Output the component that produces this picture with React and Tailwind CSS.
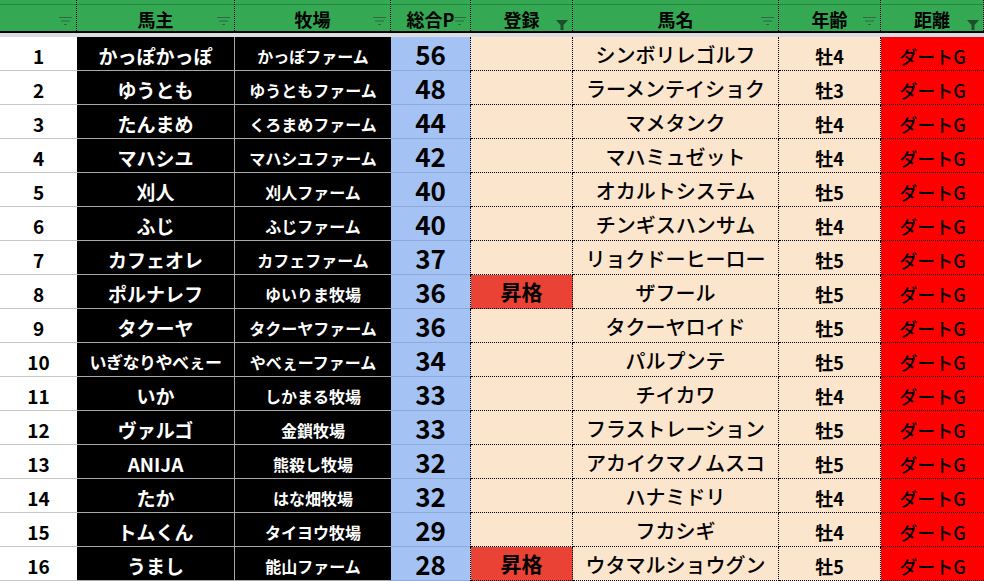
import React from 'react';

// 出走馬一覧（スプレッドシート風）
const rows = [
  [1, 'かっぽかっぽ', 'かっぽファーム', 56, '', 'シンボリレゴルフ', '牡4'],
  [2, 'ゆうとも', 'ゆうともファーム', 48, '', 'ラーメンテイショク', '牡3'],
  [3, 'たんまめ', 'くろまめファーム', 44, '', 'マメタンク', '牡4'],
  [4, 'マハシユ', 'マハシユファーム', 42, '', 'マハミュゼット', '牡4'],
  [5, '刈人', '刈人ファーム', 40, '', 'オカルトシステム', '牡5'],
  [6, 'ふじ', 'ふじファーム', 40, '', 'チンギスハンサム', '牡4'],
  [7, 'カフェオレ', 'カフェファーム', 37, '', 'リョクドーヒーロー', '牡5'],
  [8, 'ポルナレフ', 'ゆいりま牧場', 36, '昇格', 'ザフール', '牡5'],
  [9, 'タクーヤ', 'タクーヤファーム', 36, '', 'タクーヤロイド', '牡5'],
  [10, 'いぎなりやべぇー', 'やべぇーファーム', 34, '', 'パルプンテ', '牡5'],
  [11, 'いか', 'しかまる牧場', 33, '', 'チイカワ', '牡4'],
  [12, 'ヴァルゴ', '金鎖牧場', 33, '', 'フラストレーション', '牡5'],
  [13, 'ANIJA', '熊殺し牧場', 32, '', 'アカイクマノムスコ', '牡5'],
  [14, 'たか', 'はな畑牧場', 32, '', 'ハナミドリ', '牡4'],
  [15, 'トムくん', 'タイヨウ牧場', 29, '', 'フカシギ', '牡4'],
  [16, 'うまし', '能山ファーム', 28, '昇格', 'ウタマルショウグン', '牡5'],
];

const headers = [
  { label: '' },
  { label: '馬主' },
  { label: '牧場' },
  { label: '総合P' },
  { label: '登録', filtered: true },
  { label: '馬名' },
  { label: '年齢' },
  { label: '距離', filtered: true },
];

const cols = 'grid grid-cols-[77px_158px_156px_80px_102px_206px_102px_103px]';

function FilterIcon({ filtered }) {
  if (filtered) {
    return (
      <svg width="12" height="10" viewBox="0 0 12 10" className="absolute right-[4px] top-[20px]">
        <polygon points="0,0 12,0 7.5,5 7.5,10 4.5,10 4.5,5" fill="#1d4f2b" />
      </svg>
    );
  }
  return (
    <svg width="13" height="8" viewBox="0 0 13 8" className="absolute right-[4px] top-[17px]">
      <rect x="0" y="0" width="13" height="1" fill="#2f6b3e" />
      <rect x="2" y="3.5" width="9" height="1" fill="#2f6b3e" />
      <rect x="5" y="7" width="3" height="1" fill="#2f6b3e" />
    </svg>
  );
}

export default function App() {
  return (
    <div className="w-[984px] h-[581px] overflow-hidden bg-white font-['Noto_Sans_CJK_JP','Noto_Sans',sans-serif] text-black">
      {/* ヘッダー */}
      <div className={`${cols} border-b-2 border-black`}>
        {headers.map((h, i) => (
          <div
            key={i}
            className="relative h-[31px] bg-[#34a853] shadow-[inset_0_4px_0_#34a853,inset_0_5px_0_#26883f] border-r border-dotted border-black flex items-center justify-center pt-[6px] text-[18px] font-bold leading-none"
          >
            {h.label}
            <FilterIcon filtered={h.filtered} />
          </div>
        ))}
      </div>
      <div className="h-[4px] bg-[#dadce0]" />

      {/* 本体 */}
      {rows.map(([no, owner, farm, pts, reg, horse, age]) => (
        <div key={no} className={`${cols} h-[34px]`}>
          <div className="bg-white border-b border-[#c6c6c6] flex items-center justify-center pt-[3px] text-[19px] font-bold leading-none">
            {no}
          </div>
          <div
            className={`bg-black text-white border-b border-r border-[#a8a8a8] flex items-center justify-center pt-[3px] font-bold leading-none ${
              owner.length > 6 ? 'text-[17px] tracking-[-0.5px]' : 'text-[19px]'
            }`}
          >
            {owner}
          </div>
          <div className="bg-black text-white border-b border-[#a8a8a8] flex items-center justify-center pt-[5px] text-[16px] font-bold leading-none">
            {farm}
          </div>
          <div className="bg-[#a4c2f4] border-r border-dotted border-black shadow-[inset_0_-1px_0_#8eaad8] flex items-center justify-center text-[26px] font-bold leading-none">
            {pts}
          </div>
          <div
            className={`border-r border-b border-dotted border-black flex items-center justify-center text-[21px] font-bold leading-none ${
              reg ? 'bg-[#ea4335]' : 'bg-[#fce5cd]'
            }`}
          >
            {reg}
          </div>
          <div className="bg-[#fce5cd] border-r border-b border-dotted border-black flex items-center justify-center pt-[2px] text-[20px] font-medium leading-none">
            {horse}
          </div>
          <div className="bg-[#fce5cd] border-r border-b border-dotted border-black flex items-center justify-center pt-[5px] text-[18px] font-bold leading-none">
            {age}
          </div>
          <div className="bg-[#ff0000] border-b border-dotted border-black flex items-center justify-center pt-[5px] text-[18px] font-medium leading-none">
            ダートG
          </div>
        </div>
      ))}
    </div>
  );
}
